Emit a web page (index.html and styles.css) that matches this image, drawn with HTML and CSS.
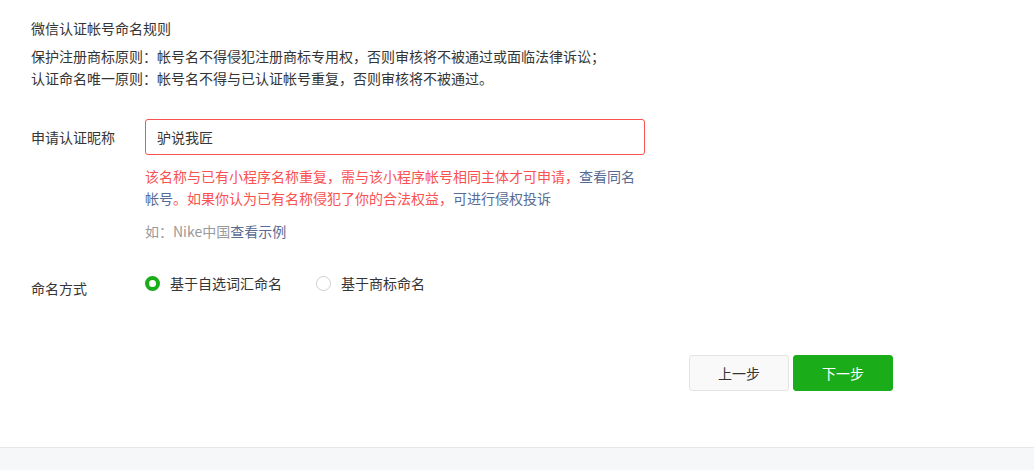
FILE: index.html
```html
<!DOCTYPE html>
<html lang="zh">
<head>
<meta charset="utf-8">
<link rel="stylesheet" href="styles.css">
</head>
<body>
<div class="page">
  <div class="main">
    <div class="rules">
      <h3 class="rules-title">微信认证帐号命名规则</h3>
      <p class="rules-line">保护注册商标原则：帐号名不得侵犯注册商标专用权，否则审核将不被通过或面临法律诉讼；</p>
      <p class="rules-line">认证命名唯一原则：帐号名不得与已认证帐号重复，否则审核将不被通过。</p>
    </div>
    <div class="form-row row-name">
      <label class="form-label">申请认证昵称</label>
      <div class="form-body">
        <div class="input-box">驴说我匠</div>
        <p class="error">该名称与已有小程序名称重复，需与该小程序帐号相同主体才可申请，<a class="link">查看同名帐号</a>。如果你认为已有名称侵犯了你的合法权益，<a class="link">可进行侵权投诉</a></p>
        <p class="hint">如：Nike中国<a class="link">查看示例</a></p>
      </div>
    </div>
    <div class="form-row row-mode">
      <label class="form-label label-mode">命名方式</label>
      <div class="radios">
        <span class="radio checked"><i class="dot"></i>基于自选词汇命名</span>
        <span class="radio"><i class="dot"></i>基于商标命名</span>
      </div>
    </div>
    <div class="actions">
      <button class="btn btn-default">上一步</button>
      <button class="btn btn-primary">下一步</button>
    </div>
  </div>
  <div class="footer"></div>
</div>
</body>
</html>
```
FILE: styles.css
```css
* { box-sizing: border-box; }
html, body { margin: 0; padding: 0; background: #fff; }
body {
  font-family: "Microsoft YaHei", "Noto Sans CJK SC", "Liberation Sans", sans-serif;
  font-size: 14px;
  color: #353535;
}
.page { width: 1034px; height: 470px; display: flex; flex-direction: column; }
.main { flex: 1; padding: 17px 0 0 31px; }
.rules-title { margin: 0 0 6px; font-size: 14px; font-weight: normal; line-height: 22px; }
.rules-line { margin: 0; line-height: 22px; }
.form-row { display: flex; }
.row-name { margin-top: 30px; }
.form-label { width: 114px; flex: none; line-height: 36px; }
.form-body { width: 500px; }
.input-box {
  height: 36px;
  border: 1px solid #fa5151;
  border-radius: 3px;
  padding: 0 11px;
  line-height: 34px;
  color: #353535;
}
.error { margin: 10px 0 0; line-height: 22px; color: #fa5151; }
.link { color: #576b95; text-decoration: none; }
.hint { margin: 11px 0 0; line-height: 22px; color: #9a9a9a; }
.row-mode { margin-top: 26px; }
.label-mode { line-height: 22px; padding-top: 9px; }
.radios { display: flex; gap: 34px; align-self: flex-start; margin-top: 4px; }
.radio { display: flex; align-items: center; line-height: 22px; }
.dot {
  width: 15px; height: 15px; border-radius: 50%;
  border: 1px solid #cfcfcf; margin-right: 10px; background: #fff;
}
.radio.checked .dot { border: 4px solid #1aad19; }
.actions { display: flex; gap: 4px; margin: 56px 0 0 658px; }
.btn {
  width: 100px; height: 36px; border-radius: 3px;
  font-family: inherit; font-size: 14px; cursor: pointer;
}
.btn-default { background: #f9f9f9; border: 1px solid #e4e4e4; color: #353535; }
.btn-primary { background: #1aad19; border: 1px solid #1aad19; color: #fff; }
.footer { height: 23px; flex: none; background: #f6f7f9; border-top: 1px solid #e7e7eb; }
```
